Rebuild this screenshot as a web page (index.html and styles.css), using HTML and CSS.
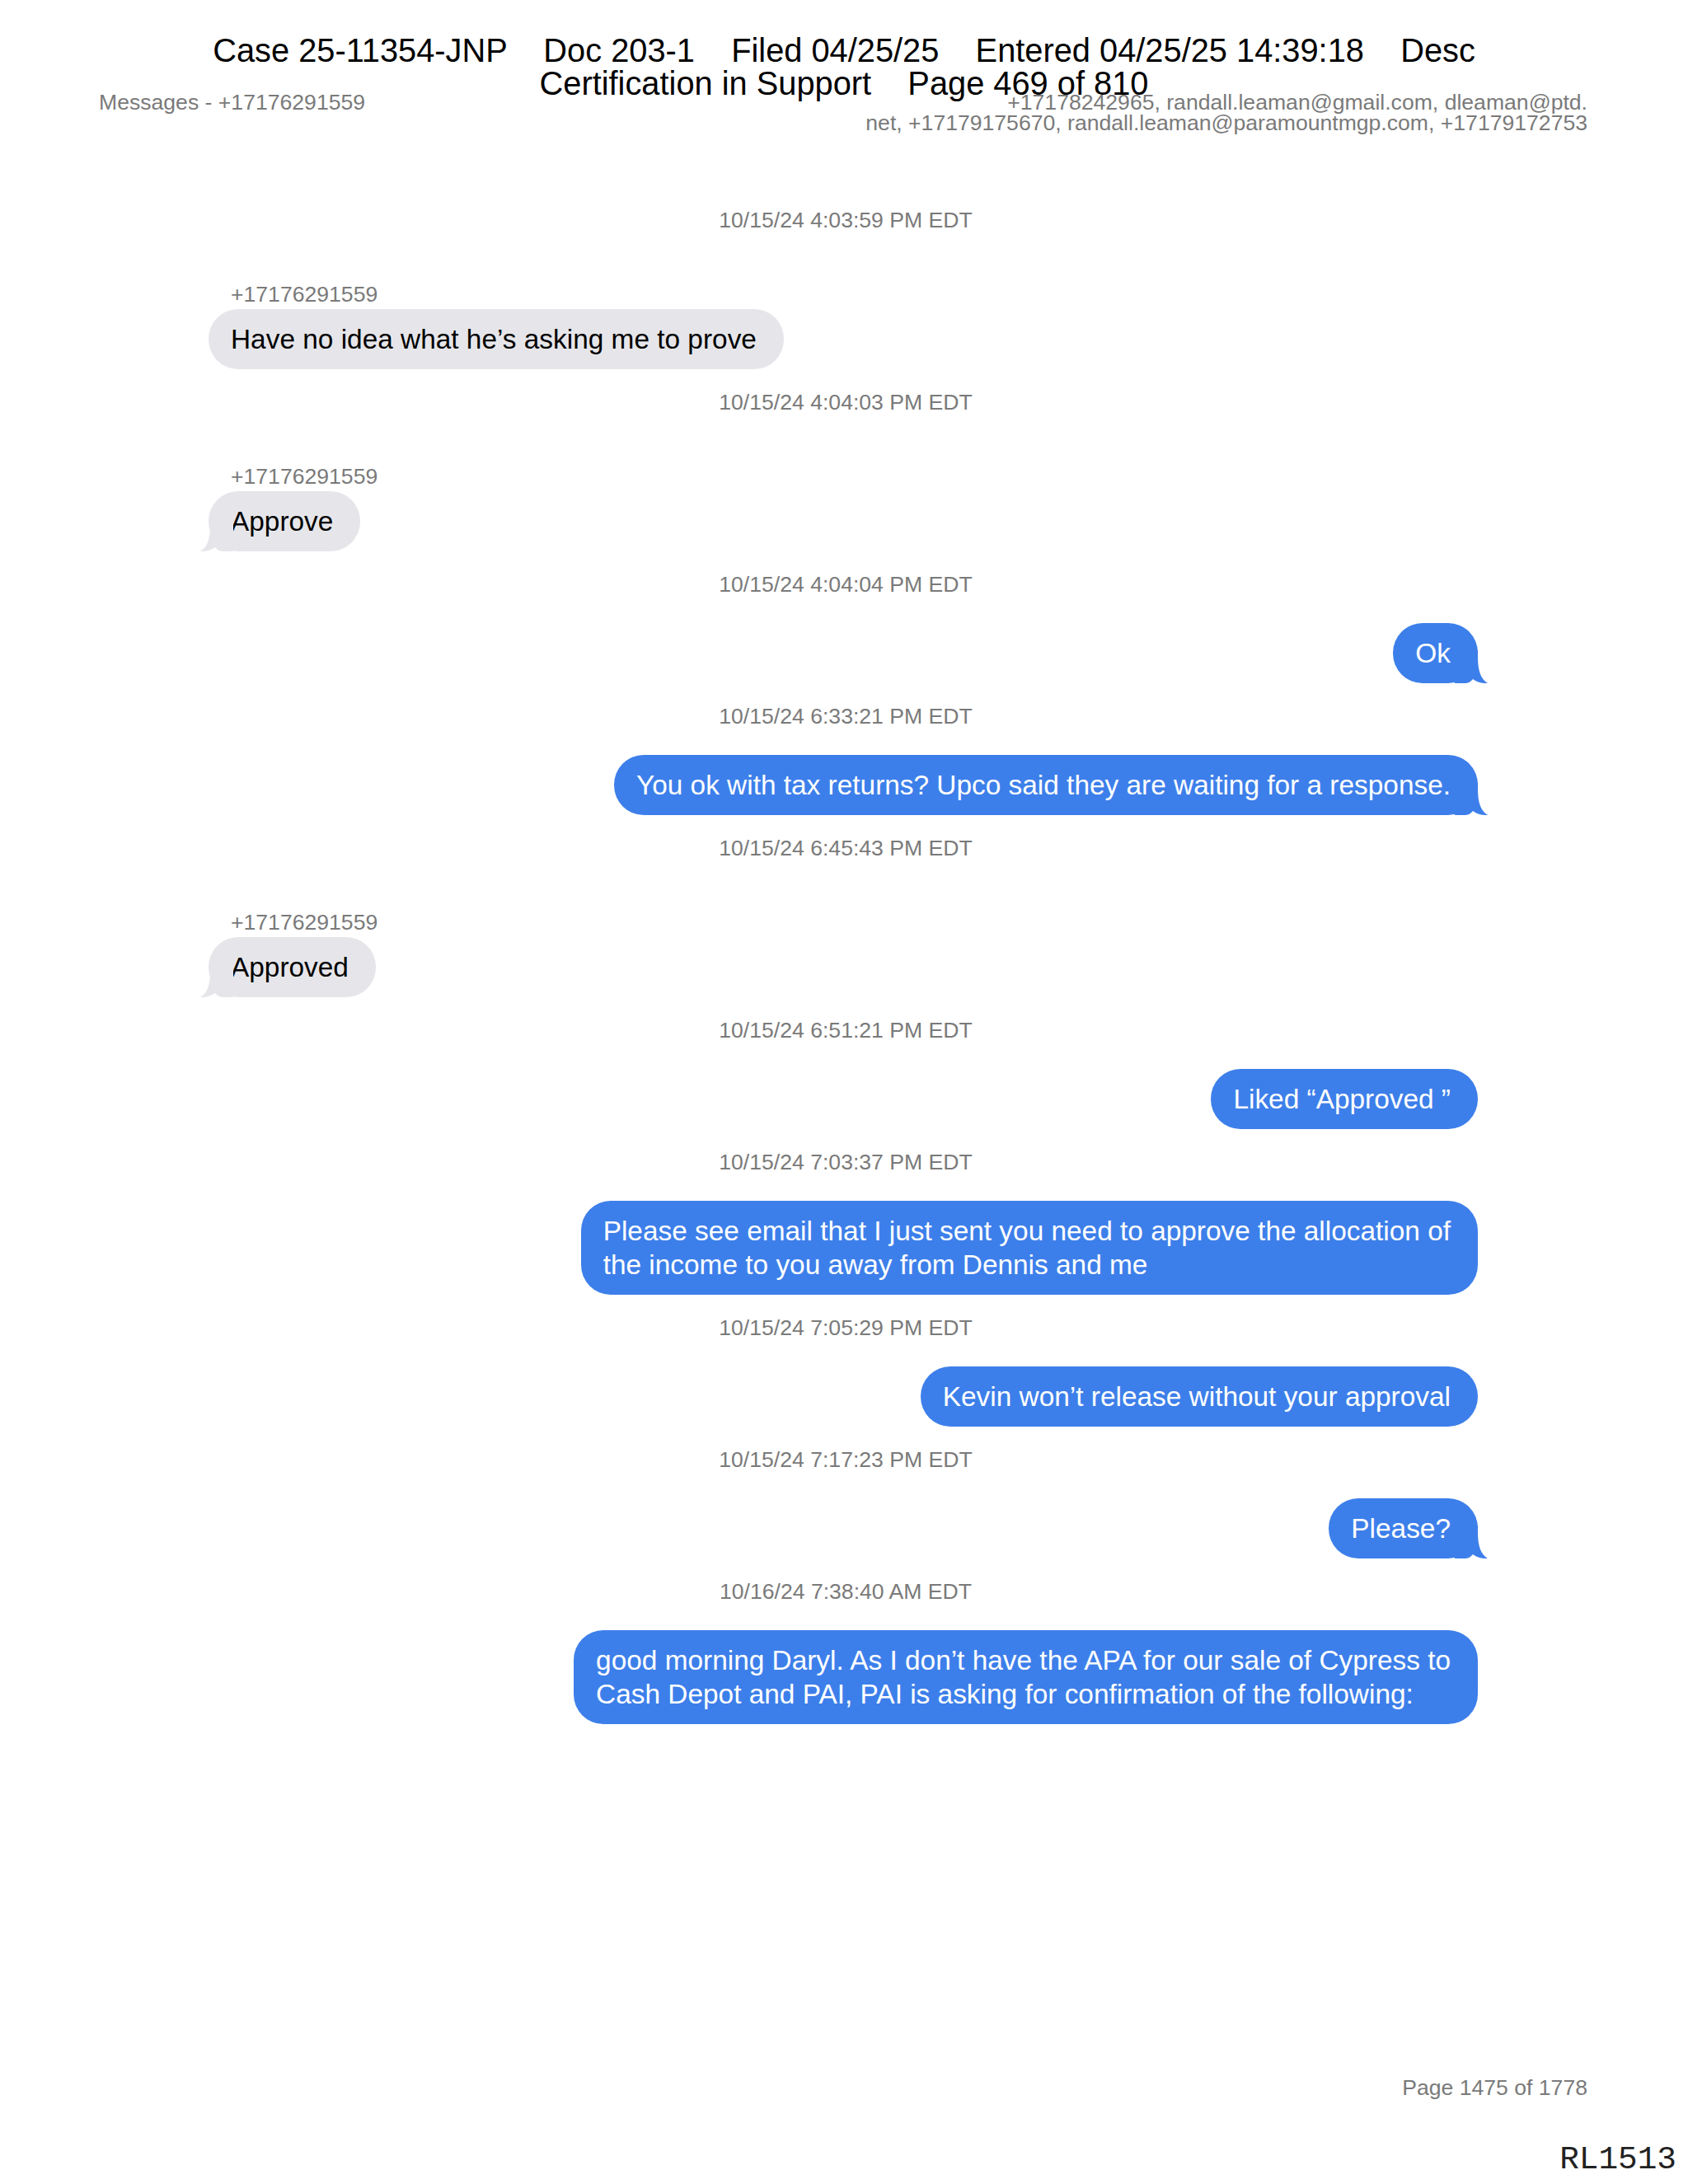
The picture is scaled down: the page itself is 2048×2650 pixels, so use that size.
FILE: index.html
```html
<!DOCTYPE html>
<html lang="en">
<head>
  <meta charset="UTF-8" />
  <title>Messages - +17176291559</title>
  <link rel="stylesheet" href="styles.css">
</head>
<body>

<div class="page">
  <div class="case-stamp">
    <div class="stamp-line">Case 25-11354-JNP    Doc 203-1    Filed 04/25/25    Entered 04/25/25 14:39:18    Desc</div>
    <div class="stamp-line">Certification in Support    Page 469 of 810</div>
  </div>

  <header class="meta">
    <div class="meta-title">Messages - +17176291559</div>
    <div class="meta-people">+17178242965, randall.leaman@gmail.com, dleaman@ptd.<br>net, +17179175670, randall.leaman@paramountmgp.com, +17179172753</div>
  </header>

  <main class="thread">
    <div class="stamp first">10/15/24 4:03:59 PM EDT</div>
    <div class="msg in">
      <div class="sender">+17176291559</div>
      <div class="bubble">Have no idea what he’s asking me to prove</div>
    </div>

    <div class="stamp">10/15/24 4:04:03 PM EDT</div>
    <div class="msg in">
      <div class="sender">+17176291559</div>
      <div class="bubble">Approve<svg class="tail" viewBox="0 0 40 40"><path d="M0 0H28V8C28 26 32 35 40 40C33 40.5 27 38.5 22 35C20 37.5 17 40 13 40H0Z"/></svg></div>
    </div>

    <div class="stamp">10/15/24 4:04:04 PM EDT</div>
    <div class="msg out">
      <div class="bubble">Ok<svg class="tail" viewBox="0 0 40 40"><path d="M0 0H28V8C28 26 32 35 40 40C33 40.5 27 38.5 22 35C20 37.5 17 40 13 40H0Z"/></svg></div>
    </div>

    <div class="stamp">10/15/24 6:33:21 PM EDT</div>
    <div class="msg out">
      <div class="bubble">You ok with tax returns? Upco said they are waiting for a response.<svg class="tail" viewBox="0 0 40 40"><path d="M0 0H28V8C28 26 32 35 40 40C33 40.5 27 38.5 22 35C20 37.5 17 40 13 40H0Z"/></svg></div>
    </div>

    <div class="stamp">10/15/24 6:45:43 PM EDT</div>
    <div class="msg in">
      <div class="sender">+17176291559</div>
      <div class="bubble">Approved<svg class="tail" viewBox="0 0 40 40"><path d="M0 0H28V8C28 26 32 35 40 40C33 40.5 27 38.5 22 35C20 37.5 17 40 13 40H0Z"/></svg></div>
    </div>

    <div class="stamp">10/15/24 6:51:21 PM EDT</div>
    <div class="msg out">
      <div class="bubble">Liked “Approved ”</div>
    </div>

    <div class="stamp">10/15/24 7:03:37 PM EDT</div>
    <div class="msg out">
      <div class="bubble">Please see email that I just sent you need to approve the allocation of<br>the income to you away from Dennis and me</div>
    </div>

    <div class="stamp">10/15/24 7:05:29 PM EDT</div>
    <div class="msg out">
      <div class="bubble">Kevin won’t release without your approval</div>
    </div>

    <div class="stamp">10/15/24 7:17:23 PM EDT</div>
    <div class="msg out">
      <div class="bubble">Please?<svg class="tail" viewBox="0 0 40 40"><path d="M0 0H28V8C28 26 32 35 40 40C33 40.5 27 38.5 22 35C20 37.5 17 40 13 40H0Z"/></svg></div>
    </div>

    <div class="stamp">10/16/24 7:38:40 AM EDT</div>
    <div class="msg out">
      <div class="bubble">good morning Daryl. As I don’t have the APA for our sale of Cypress to<br>Cash Depot and PAI, PAI is asking for confirmation of the following:</div>
    </div>
  </main>

  <footer>
    <div class="page-count">Page 1475 of 1778</div>
    <div class="bates">RL1513</div>
  </footer>
</div>

</body>
</html>
```

FILE: styles.css
```css
:root {
  --blue: rgb(61, 127, 234);
  --grey-bubble: rgb(230, 230, 234);
  --muted: rgb(122, 122, 122);
  --ink: rgb(0, 0, 0);
}

body {
  margin: 0;
  background: #fff;
  font-family: 'Liberation Sans', Arial, sans-serif;
  color: var(--ink);
}

.page {
  position: relative;
  width: 2048px;
  min-height: 2650px;
  display: flex;
  flex-direction: column;
}

/* court filing stamp printed over the top of the page */
.case-stamp {
  position: absolute;
  top: 41px;
  left: 0;
  right: 0;
  text-align: center;
  font-size: 39.8px;
  line-height: 40px;
  color: #000;
}

.stamp-line {
  white-space: pre;
}

.meta {
  display: flex;
  justify-content: space-between;
  align-items: flex-start;
  padding: 112px 122px 0 120px;
  font-size: 26.6px;
  line-height: 25px;
  color: var(--muted);
}

.meta-people {
  text-align: right;
}

.thread {
  display: flex;
  flex-direction: column;
  padding: 0 255px 0 253px;
  margin-top: 90px;
}

.stamp {
  align-self: center;
  font-size: 26.6px;
  line-height: 30px;
  color: var(--muted);
  margin: 25px 0 0 6px;
}

.stamp.first {
  margin-top: 0;
}

.msg {
  display: flex;
  flex-direction: column;
}

.msg.in {
  align-items: flex-start;
  margin-top: 60px;
}

.msg.out {
  align-items: flex-end;
  margin-top: 32px;
}

.sender {
  font-size: 26.6px;
  line-height: 30px;
  color: var(--muted);
  padding-left: 27px;
  margin-bottom: 3px;
}

.bubble {
  position: relative;
  font-size: 33.4px;
  line-height: 41px;
  padding: 16px 33px 16px 27px;
  border-radius: 36px;
  white-space: nowrap;
}

.msg.in .bubble {
  background: var(--grey-bubble);
  color: #000;
}

.msg.out .bubble {
  background: var(--blue);
  color: #fff;
}

.tail {
  position: absolute;
  bottom: 0;
  width: 40px;
  height: 40px;
}

.msg.out .tail {
  right: -12px;
  fill: var(--blue);
}

.msg.in .tail {
  left: -10px;
  fill: var(--grey-bubble);
  transform: scaleX(-1);
}

footer {
  margin-top: auto;
  display: flex;
  flex-direction: column;
  align-items: flex-end;
  padding-bottom: 9px;
}

.page-count {
  font-size: 26.6px;
  line-height: 30px;
  color: var(--muted);
  padding-right: 122px;
}

.bates {
  font-family: 'Liberation Mono', 'Courier New', monospace;
  font-size: 39.4px;
  line-height: 40px;
  color: #222;
  margin-top: 53px;
  padding-right: 14px;
}
```
